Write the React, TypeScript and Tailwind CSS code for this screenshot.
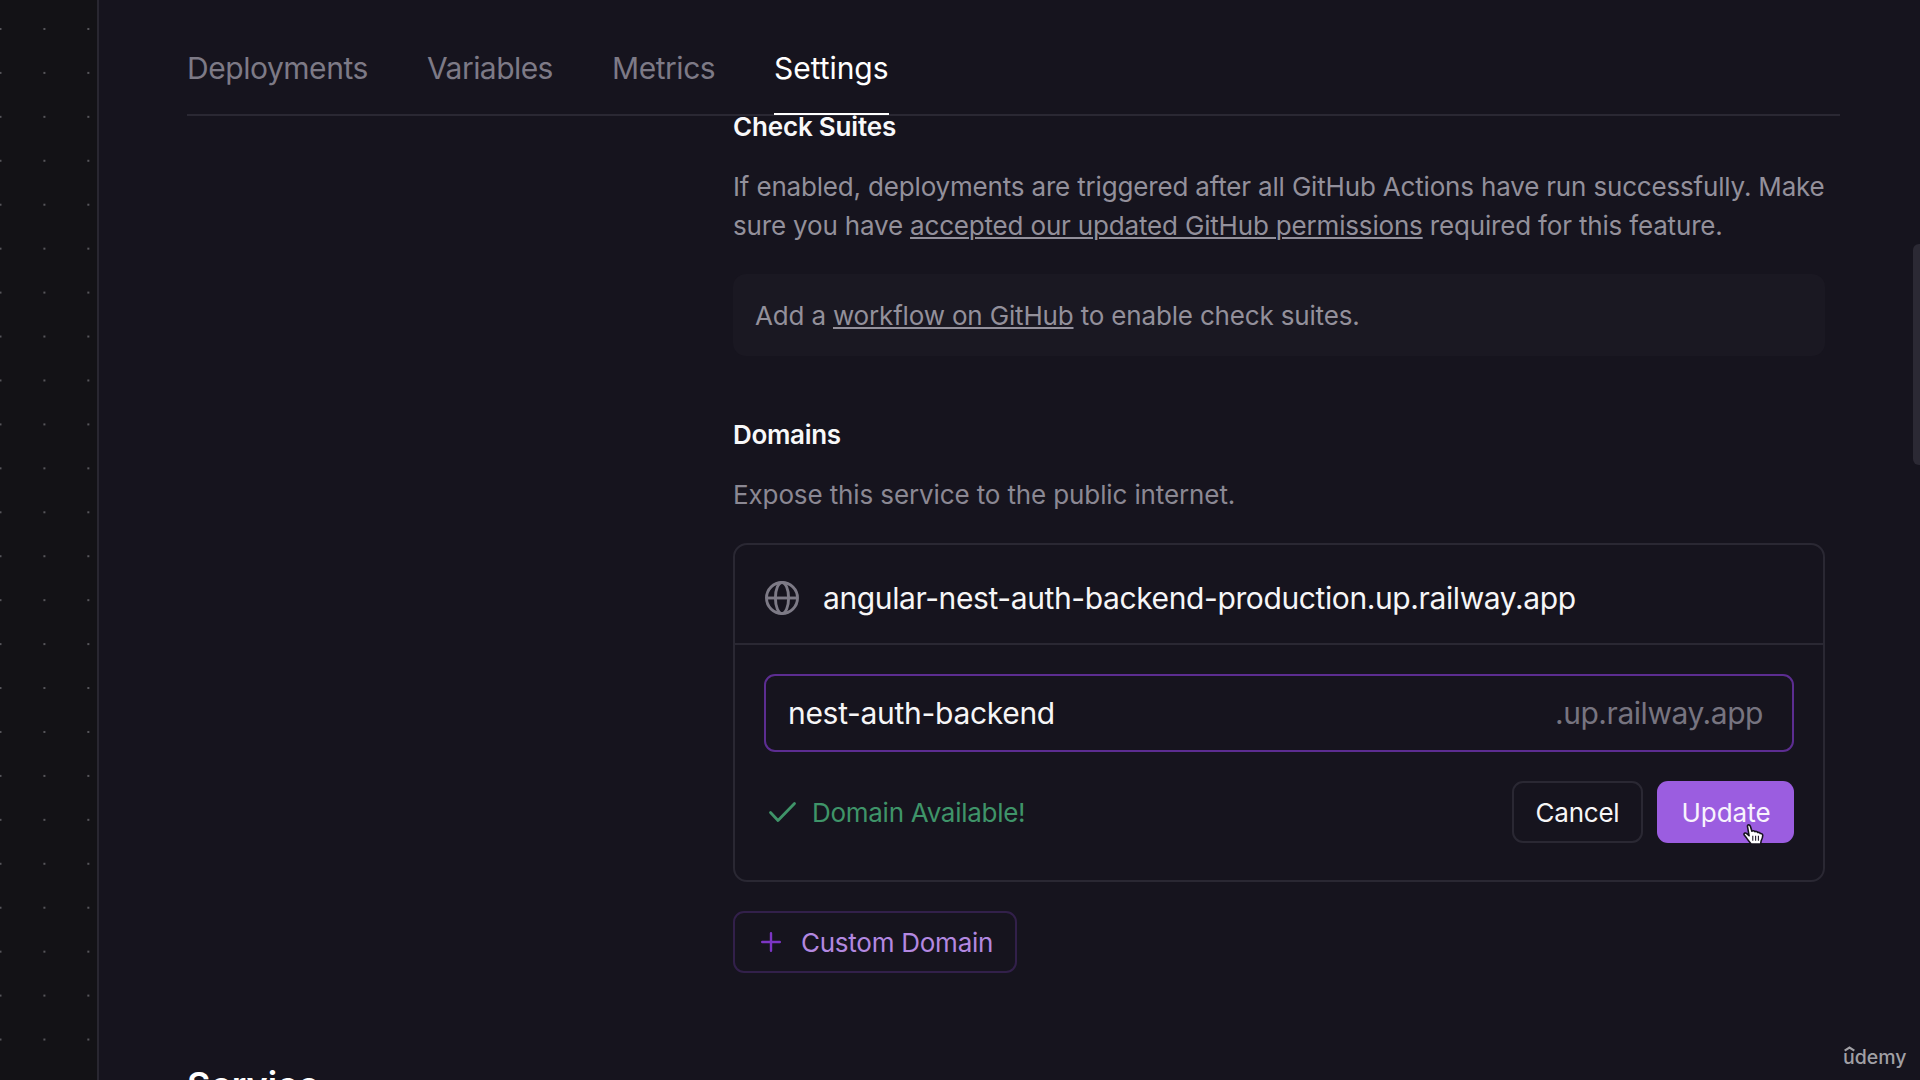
import React from "react";

const tabs = [
  { label: "Deployments", cls: "w-[181px] tracking-[-0.46px] text-[#7d7a86]" },
  { label: "Variables", cls: "w-[126px] tracking-[-0.55px] text-[#7d7a86]" },
  { label: "Metrics", cls: "w-[103px] tracking-[-0.45px] text-[#7d7a86]" },
  { label: "Settings", cls: "w-[115px] tracking-[-0.05px] text-white", active: true },
];

function GlobeIcon() {
  return (
    <svg className="size-[34px] shrink-0" viewBox="0 0 34 34" fill="none" stroke="#7d7a86" strokeWidth="2.9">
      <circle cx="17" cy="17" r="15.5" />
      <ellipse cx="17" cy="17" rx="6.6" ry="15.5" />
      <path d="M1.5 17h31" />
    </svg>
  );
}

function HandCursor() {
  return (
    <svg className="absolute left-[86px] top-[43px] h-[21px] w-[21px]" viewBox="0 0 20 20">
      <path
        d="M4.3 2.6C4 1.3 4.7.8 5.4.8c.8 0 1.3.5 1.6 1.4l1.5 4.6c.6-.6 2.3-.6 2.8.5.8-.6 2.3-.3 2.7.8 1-.4 2.1 0 2.4 1 1.2-.3 2.5.3 2.4 1.8-.1 2.2-.7 3.6-1.5 5.1l-.5 3H7.7C6.9 17.3 4.5 15.3 3.3 13.3 2.5 12 1 10.7.9 9.8c-.1-1.2 1.6-1.7 2.7-.7l2.2 2z"
        fill="#fff"
        stroke="#17131f"
        strokeWidth="1.5"
        strokeLinejoin="round"
      />
      <path d="M9.3 11.3v4.7M12 11.3v4.7M14.7 11.3v4.7" stroke="#2a2433" strokeWidth="1.1" />
    </svg>
  );
}

function Header() {
  return (
    <header className="flex h-[116px] w-[1653px] gap-[59px] border-b-2 border-[#2a2833] pt-[50px]">
      {tabs.map((t) => (
        <div key={t.label} className={`relative whitespace-nowrap text-[30px] leading-[36px] ${t.cls}`}>
          {t.label}
          {t.active && <span className="absolute inset-x-0 -bottom-px h-[2px] bg-white" />}
        </div>
      ))}
    </header>
  );
}

function DomainCard() {
  return (
    <div className="mt-[29px] h-[339px] rounded-[14px] border-2 border-[#2a2833]">
      <div className="flex h-[100px] items-center border-b-2 border-[#2a2833] pl-[30px] pt-[7px]">
        <GlobeIcon />
        <span className="ml-[24px] whitespace-nowrap text-[30px] leading-[36px] tracking-[-0.39px] text-[#f6f6f7]">
          angular-nest-auth-backend-production.up.railway.app
        </span>
      </div>
      <div className="px-[29px] pt-[29px]">
        <div className="flex h-[78px] items-center justify-between rounded-[11px] border-2 border-[#5c2d91] pl-[22px] pr-[29px] text-[30px] leading-[36px]">
          <span className="tracking-[-0.3px] text-[#f6f6f7]">nest-auth-backend</span>
          <span className="tracking-[-0.45px] text-[#777480]">.up.railway.app</span>
        </div>
        <div className="mt-[29px] flex h-[62px] items-center text-[26px] leading-[32px]">
          <svg className="ml-[4px] h-[22px] w-[30px]" viewBox="0 0 30 22" fill="none" stroke="#3f9469" strokeWidth="2.8" strokeLinecap="round" strokeLinejoin="round">
            <path d="M2.5 11.5l7.5 8L26.5 2.5" />
          </svg>
          <span className="ml-[14px] pt-[2px] tracking-[-0.28px] text-[#3f9469]">Domain Available!</span>
          <button className="ml-auto h-[62px] w-[131px] rounded-[11px] border-2 border-[#2a2833] pt-[2px] tracking-[-0.25px] text-[#f6f6f7]">
            Cancel
          </button>
          <button className="relative ml-[14px] h-[62px] w-[137px] rounded-[11px] bg-[#9b5de0] pl-px pt-[2px] text-[#f8f3fd]">
            Update
            <HandCursor />
          </button>
        </div>
      </div>
    </div>
  );
}

export default function App() {
  return (
    <div className="relative flex h-[1080px] w-[1920px] overflow-hidden bg-[#16141e] font-['Inter',sans-serif]">
      <aside className="w-[99px] shrink-0 border-r-2 border-[#292731] bg-[#131216] bg-[radial-gradient(circle_at_22px_22px,#56555a_0.9px,transparent_1.5px)] bg-[size:43.94px_43.94px] bg-[position:-21.5px_7px]" />
      <main className="h-full flex-1 overflow-hidden pl-[88px]">
        <Header />
        <section className="ml-[546px] w-[1092px]">
          <h2 className="whitespace-nowrap pt-px text-[26px] font-semibold leading-[20px] tracking-[-0.18px] text-[#f8f8f9]">Check Suites</h2>
          <p className="mt-[31px] whitespace-nowrap text-[26px] leading-[38.7px] tracking-[-0.175px] text-[#93909b]">
            If enabled, deployments are triggered after all GitHub Actions have run successfully. Make
            <br />
            sure you have{" "}
            <a className="underline decoration-2 underline-offset-[2px]">accepted our updated GitHub permissions</a> required for this
            feature.
          </p>
          <div className="mt-[28.6px] flex h-[82px] items-center whitespace-pre rounded-[13px] bg-[#1a1822] pl-[22px] pt-[2px] text-[26px] leading-[32px] tracking-[-0.17px] text-[#93909b]">
            <span>Add a </span>
            <a className="underline decoration-2 underline-offset-[2px]">workflow on GitHub</a>
            <span> to enable check suites.</span>
          </div>
          <h2 className="mt-[69px] text-[26px] font-semibold leading-[20px] tracking-[-0.3px] text-[#f8f8f9]">Domains</h2>
          <p className="mt-[31px] text-[26px] leading-[38px] tracking-[-0.12px] text-[#8b8893]">Expose this service to the public internet.</p>
          <DomainCard />
          <button className="mt-[29px] flex h-[62px] w-[284px] items-center rounded-[11px] border-2 border-[#32204a] pl-[26px] text-[26px] leading-[32px] tracking-[-0.25px] text-[#b388e0]">
            <svg className="size-[20px]" viewBox="0 0 20 20" stroke="#7c35c4" strokeWidth="2.4" strokeLinecap="round">
              <path d="M10 1.2v17.6M1.2 10h17.6" />
            </svg>
            <span className="ml-[20px] pt-px">Custom Domain</span>
          </button>
        </section>
        <h1 className="mt-[92px] text-[36px] font-semibold leading-[40px] text-white">Service</h1>
      </main>
      <div className="absolute right-0 top-[244px] h-[221px] w-[7px] rounded-l-[6px] bg-[#2b2934]" />
      <div className="absolute left-[1843px] top-[1045px] h-[26px] w-[68px] text-[#a1a0a5]">
        <svg className="absolute left-[1px] top-0 h-[7px] w-[11px]" viewBox="0 0 11 7" fill="none" stroke="currentColor" strokeWidth="2.2">
          <path d="M.7 5.6L5.5 2.5l4.8 3.1" />
        </svg>
        <span className="block text-[19.5px] font-medium leading-[24px]">udemy</span>
      </div>
    </div>
  );
}
